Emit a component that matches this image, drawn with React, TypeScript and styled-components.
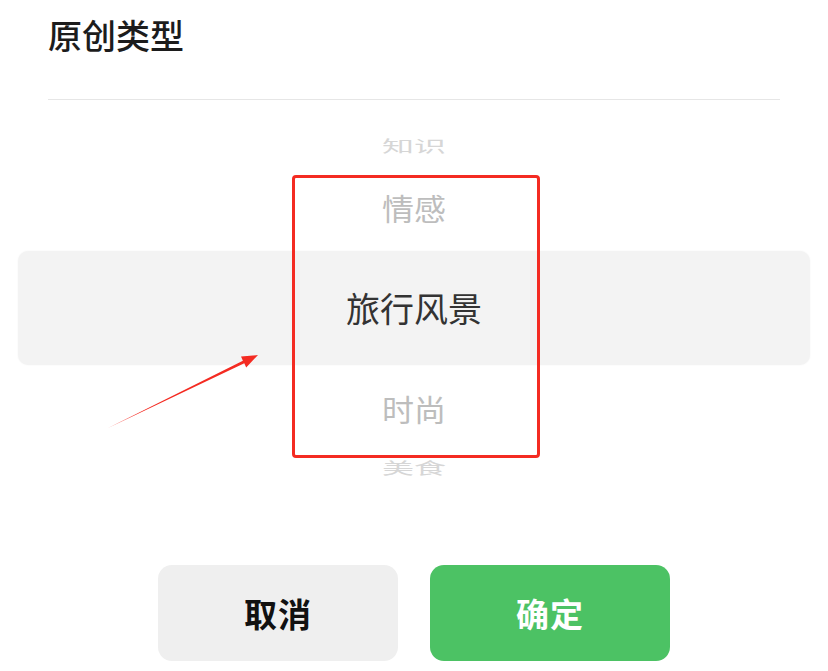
import React from "react";
import styled, { createGlobalStyle } from "styled-components";

const GlobalStyle = createGlobalStyle`
  html, body {
    margin: 0;
    padding: 0;
    background: #ffffff;
  }
  body {
    font-family: "Noto Sans CJK SC", "Noto Sans", sans-serif;
  }
`;

const Page = styled.div`
  position: relative;
  width: 828px;
  height: 671px;
  overflow: hidden;
  background: #fff;
  display: flex;
  flex-direction: column;
`;

const Header = styled.div`
  margin: 0 48px;
  height: 100px;
  box-sizing: border-box;
  border-bottom: 1px solid #e6e6e6;
  display: flex;
  align-items: flex-start;
`;

const Title = styled.h1`
  margin: 13px 0 0;
  font-size: 34px;
  line-height: 44px;
  font-weight: 500;
  color: #1c1c1c;
`;

const Wheel = styled.div`
  display: flex;
  flex-direction: column;
  padding-top: 15px;
`;

const Row = styled.div<{ $h: number; $tone: "far" | "near" | "active"; $squash: number }>`
  height: ${(p) => p.$h}px;
  display: flex;
  align-items: center;
  justify-content: center;
  font-size: ${(p) => (p.$tone === "active" ? 34 : 32)}px;
  line-height: 1;
  color: ${(p) => (p.$tone === "active" ? "#333" : p.$tone === "near" ? "#bdbdbd" : "#d6d6d6")};
  transform: scaleY(${(p) => p.$squash});
`;

const Selected = styled(Row)`
  margin: 12px 18px 0;
  background: #f3f3f3;
  border-radius: 10px;
  box-shadow: 0 0 2px rgba(0, 0, 0, 0.05);
`;

const Actions = styled.div`
  margin-top: auto;
  margin-bottom: 10px;
  display: flex;
  justify-content: center;
  gap: 32px;
`;

const Button = styled.button<{ $primary?: boolean }>`
  width: 240px;
  height: 96px;
  border: none;
  border-radius: 14px;
  background: ${(p) => (p.$primary ? "#4cc264" : "#efefef")};
  color: ${(p) => (p.$primary ? "#fff" : "#111")};
  font-family: "Noto Sans CJK SC", sans-serif;
  font-size: 33px;
  font-weight: 700;
  letter-spacing: 1px;
`;

const Highlight = styled.div`
  position: absolute;
  left: 292px;
  top: 175px;
  width: 248px;
  height: 283px;
  box-sizing: border-box;
  border: 3px solid #f42b22;
  border-radius: 4px;
  pointer-events: none;
`;

const Overlay = styled.svg`
  position: absolute;
  left: 0;
  top: 0;
  pointer-events: none;
`;

const items = [
  { label: "知识", h: 60, tone: "far" as const, squash: 0.5 },
  { label: "情感", h: 64, tone: "near" as const, squash: 0.92 },
];
const after = [
  { label: "时尚", h: 86, tone: "near" as const, squash: 0.92 },
  { label: "美食", h: 32, tone: "far" as const, squash: 0.5 },
];

export default function App() {
  return (
    <Page>
      <GlobalStyle />
      <Header>
        <Title>原创类型</Title>
      </Header>
      <Wheel>
        {items.map((it) => (
          <Row key={it.label} $h={it.h} $tone={it.tone} $squash={it.squash}>
            {it.label}
          </Row>
        ))}
        <Selected $h={114} $tone="active" $squash={1}>
          旅行风景
        </Selected>
        {after.map((it) => (
          <Row key={it.label} $h={it.h} $tone={it.tone} $squash={it.squash}>
            {it.label}
          </Row>
        ))}
      </Wheel>
      <Actions>
        <Button>取消</Button>
        <Button $primary>确定</Button>
      </Actions>
      <Highlight />
      <Overlay width="828" height="671" viewBox="0 0 828 671">
        <polygon
          fill="#f42b22"
          points="108,428 244.3,363.3 246.2,367.4 258,355 241,356.6 242.9,360.7"
        />
      </Overlay>
    </Page>
  );
}
